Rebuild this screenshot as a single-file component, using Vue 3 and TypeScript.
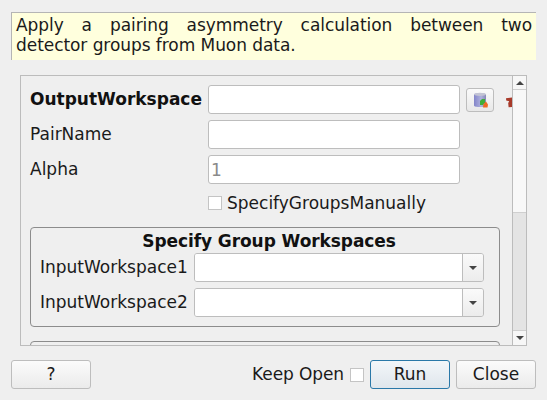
<script setup lang="ts">
const textRows = [
  { label: 'PairName', placeholder: '' },
  { label: 'Alpha', placeholder: '1' },
];
const comboRows = ['InputWorkspace1', 'InputWorkspace2'];
</script>

<template>
  <div class="dialog">
    <p class="description">Apply a pairing asymmetry calculation between two detector groups from Muon data.</p>

    <div class="scroll-area">
      <div class="viewport">
        <div class="content">
          <div class="row">
            <label class="label bold">OutputWorkspace</label>
            <input class="field" type="text" />
            <button class="browse" type="button" aria-label="Browse workspaces">
              <svg width="18" height="18" viewBox="0 0 18 18">
                <defs>
                  <linearGradient id="db" x1="0" x2="1" y1="0" y2="0">
                    <stop offset="0" stop-color="#8385c9" />
                    <stop offset="0.6" stop-color="#b0b2de" />
                    <stop offset="1" stop-color="#8688b4" />
                  </linearGradient>
                </defs>
                <path d="M3 3.5C3 1.8 15 1.8 15 3.5V14.5C15 16.5 3 16.5 3 14.5Z" fill="url(#db)" />
                <ellipse cx="9" cy="3.4" rx="6" ry="1.6" fill="#c3c4d4" />
                <path d="M9 14V10L11 8H14V11.5L12 14Z" fill="#3fae3a" />
                <path d="M12 16.5L12.5 13L15 10.5L17 13.5L16.5 16.5Z" fill="#ee6a22" />
              </svg>
            </button>
            <svg class="star" width="10" height="12" viewBox="0 0 10 12">
              <path d="M1 1.2L7 0.5V10L3.6 10.2L3.2 6L4.2 4.2L1.2 3.6Z" fill="#a83a2a" />
            </svg>
          </div>

          <div v-for="row in textRows" :key="row.label" class="row">
            <label class="label">{{ row.label }}</label>
            <input class="field" type="text" :placeholder="row.placeholder" />
          </div>

          <div class="row check-row">
            <span class="label"></span>
            <span class="check"></span>
            <span class="check-text">SpecifyGroupsManually</span>
          </div>

          <fieldset class="group">
            <div class="group-title">Specify Group Workspaces</div>
            <div v-for="name in comboRows" :key="name" class="combo-row">
              <label>{{ name }}</label>
              <div class="combo">
                <span class="combo-value"></span>
                <span class="combo-arrow"><i class="arrow-down"></i></span>
              </div>
            </div>
          </fieldset>

          <fieldset class="group next"></fieldset>
        </div>
      </div>

      <div class="scrollbar">
        <div class="sb-btn top"><i class="arrow-up"></i></div>
        <div class="sb-handle"></div>
        <div class="sb-trough"></div>
        <div class="sb-btn bottom"><i class="arrow-down"></i></div>
      </div>
    </div>

    <div class="footer">
      <button class="btn" type="button">?</button>
      <div class="footer-right">
        <span class="keep">Keep Open</span>
        <span class="check keep-check"></span>
        <button class="btn run" type="button">Run</button>
        <button class="btn" type="button">Close</button>
      </div>
    </div>
  </div>
</template>

<style>
html,
body {
  margin: 0;
  background: #efefef;
}
</style>

<style scoped>
.dialog {
  width: 547px;
  height: 400px;
  box-sizing: border-box;
  padding: 12px 11px 11px;
  background: #efefef;
  font-family: 'DejaVu Sans', sans-serif;
  font-size: 17px;
  color: #1a1a1a;
  display: flex;
  flex-direction: column;
  overflow: hidden;
}
.description {
  margin: 0;
  width: 525px;
  height: 48px;
  box-sizing: border-box;
  padding: 2px 4px 0 4px;
  background: #ffffdd;
  border-top: 1px solid #b5b5b5;
  border-left: 1px solid #b5b5b5;
  line-height: 20px;
  letter-spacing: -0.06px;
  text-align: justify;
}
.scroll-area {
  margin: 15px 0 0 9px;
  width: 507px;
  height: 271px;
  flex: none;
  box-sizing: border-box;
  border: 1px solid #bcbcbc;
  display: flex;
}
.viewport {
  flex: 1;
  min-width: 0;
  overflow: hidden;
}
.content {
  width: 520px;
  padding: 9px 0 0 9px;
}
.row {
  display: flex;
  align-items: center;
  height: 29px;
  margin-bottom: 6px;
}
.label {
  width: 178px;
  flex: none;
  padding-bottom: 2px;
}
.bold {
  font-weight: 700;
  color: #111;
}
.field {
  width: 252px;
  height: 29px;
  box-sizing: border-box;
  flex: none;
  padding: 0 2px;
  border: 1px solid #bdbdbd;
  border-radius: 3px;
  background: #fff;
  font: inherit;
  outline: none;
}
.field::placeholder {
  color: #8a8a8a;
  opacity: 1;
}
.browse {
  width: 28px;
  height: 24px;
  margin-left: 6px;
  padding: 0;
  flex: none;
  display: flex;
  align-items: center;
  justify-content: center;
  border: 1px solid #bdbdbd;
  border-radius: 3px;
  background: linear-gradient(#fafafa, #e8e8e8);
}
.star {
  margin-left: 11px;
  margin-top: 6px;
  flex: none;
}
.check-row {
  height: 26px;
  margin-bottom: 0;
}
.check {
  width: 14px;
  height: 14px;
  box-sizing: border-box;
  flex: none;
  border: 1px solid #c4c4c4;
  background: #fff;
}
.check-text {
  margin-left: 5px;
}
.group {
  width: 470px;
  box-sizing: border-box;
  height: 100px;
  margin: 11px 0 0;
  padding: 3px 15px 0 9px;
  border: 1px solid #8c8c8c;
  border-radius: 4px;
  min-width: 0;
}
.group.next {
  margin-top: 14px;
  height: 40px;
}
.group-title {
  font-weight: 700;
  text-align: center;
  color: #111;
  line-height: 20px;
  letter-spacing: -0.08px;
  margin-bottom: 2px;
  padding-left: 14px;
}
.combo-row {
  display: flex;
  align-items: center;
  justify-content: space-between;
  height: 29px;
  margin-bottom: 6px;
}
.combo-row label {
  padding-bottom: 2px;
}
.combo {
  width: 290px;
  height: 29px;
  box-sizing: border-box;
  display: flex;
  border: 1px solid #bdbdbd;
  border-radius: 3px;
  overflow: hidden;
}
.combo-value {
  flex: 1;
  background: #fff;
}
.combo-arrow {
  width: 20px;
  display: flex;
  align-items: center;
  justify-content: center;
  border-left: 1px solid #bdbdbd;
  background: linear-gradient(#fafafa, #ececec);
}
.arrow-down,
.arrow-up {
  display: block;
  width: 0;
  height: 0;
  border-left: 4px solid transparent;
  border-right: 4px solid transparent;
}
.arrow-down {
  border-top: 4px solid #444;
}
.arrow-up {
  border-bottom: 4px solid #444;
}
.scrollbar {
  width: 14px;
  flex: none;
  box-sizing: border-box;
  border-left: 1px solid #bcbcbc;
  display: flex;
  flex-direction: column;
}
.sb-btn {
  height: 14px;
  flex: none;
  box-sizing: border-box;
  display: flex;
  align-items: center;
  justify-content: center;
  background: #f7f7f7;
}
.sb-btn.top {
  border-bottom: 1px solid #cfcfcf;
}
.sb-btn.bottom {
  height: 15px;
  border-top: 1px solid #cfcfcf;
}
.sb-handle {
  height: 123px;
  box-sizing: border-box;
  flex: none;
  background: #f8f8f8;
  border-bottom: 1px solid #cfcfcf;
}
.sb-trough {
  flex: 1;
  background: #e4e4e4;
}
.footer {
  margin-top: 14px;
  display: flex;
  justify-content: space-between;
  width: 525px;
}
.footer-right {
  display: flex;
  align-items: center;
}
.btn {
  width: 80px;
  height: 29px;
  box-sizing: border-box;
  padding: 0 0 2px;
  border: 1px solid #bdbdbd;
  border-radius: 3px;
  background: linear-gradient(#fbfbfb, #ebebeb);
  font: inherit;
  color: #1a1a1a;
}
.run {
  border-color: #2a78a8;
  background: linear-gradient(#f3f6f9, #dfe6ec);
  margin-left: 6px;
  margin-right: 6px;
}
.keep {
  padding-bottom: 2px;
  letter-spacing: -0.1px;
}
.keep-check {
  margin-left: 6px;
}
</style>
